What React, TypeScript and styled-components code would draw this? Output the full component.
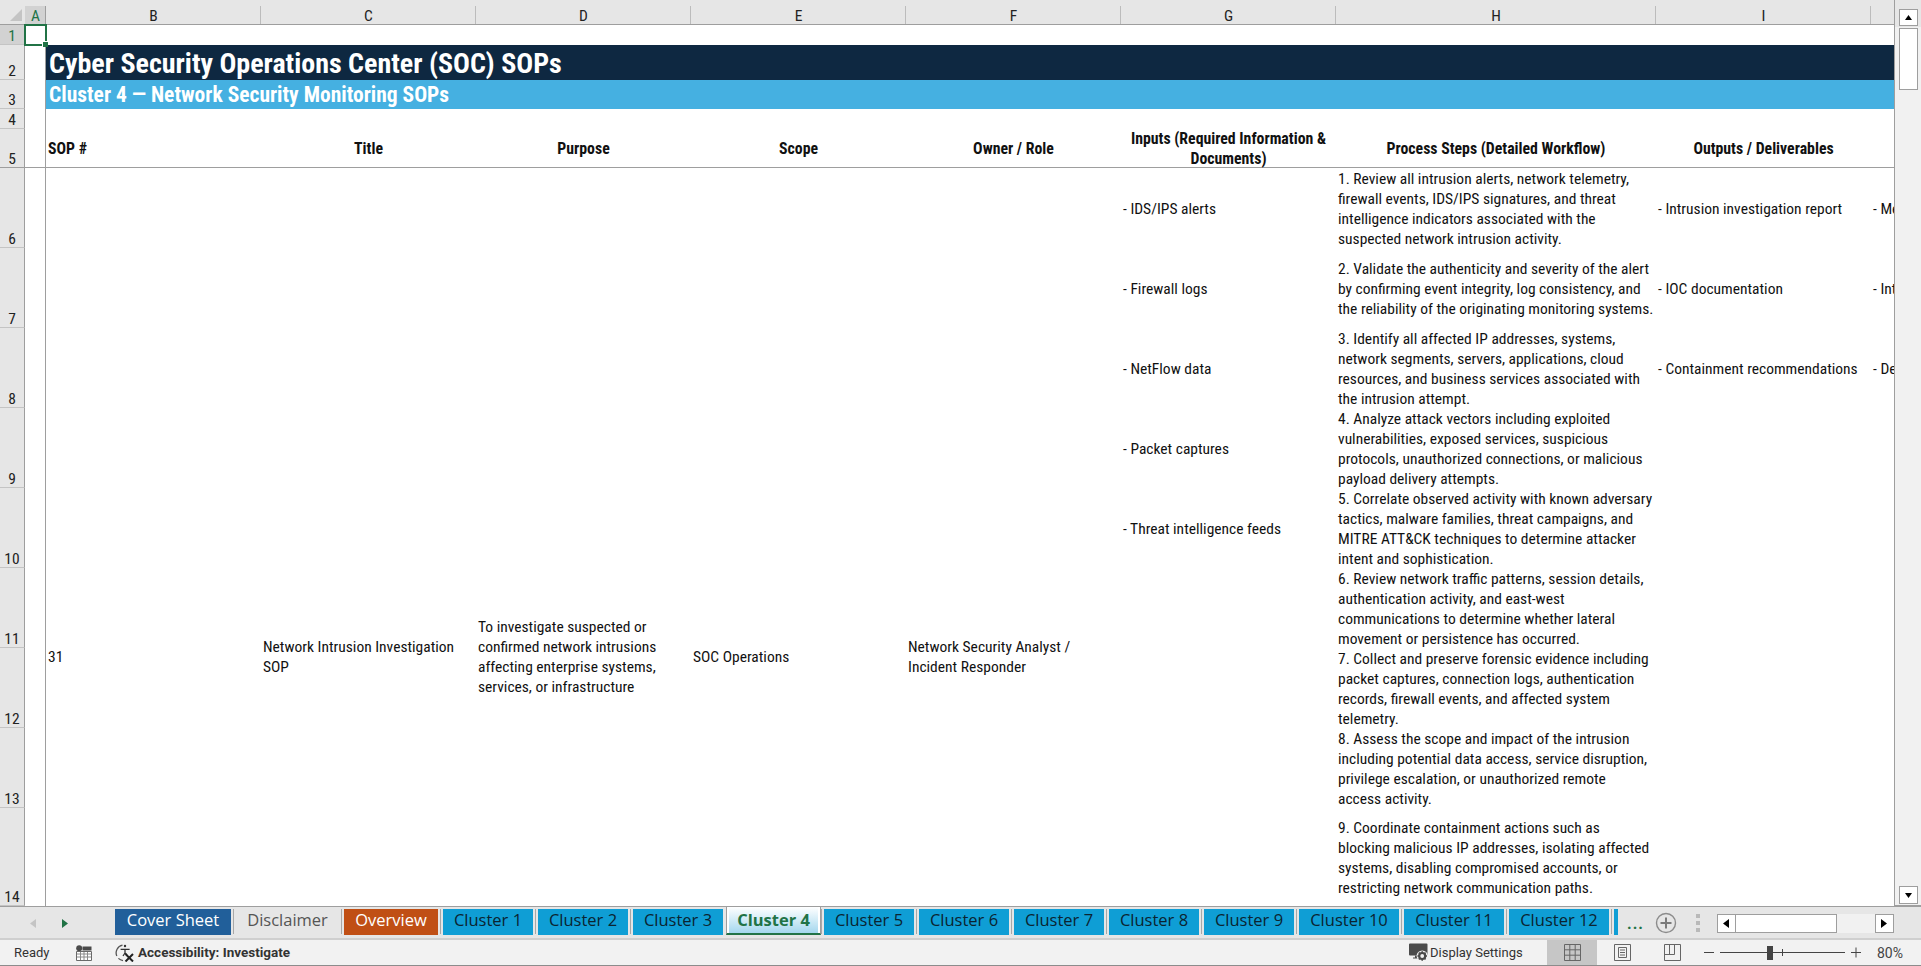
import styled, { createGlobalStyle } from "styled-components";

const sheetFont = `"Roboto Condensed", "Liberation Sans", sans-serif`;
const uiFont = `Roboto, "Liberation Sans", sans-serif`;
const tabFont = `"Open Sans", "Liberation Sans", sans-serif`;
const green = "#217346";
const headLine = "#9e9e9e";

const GlobalStyle = createGlobalStyle`
  html, body { margin: 0; padding: 0; background: #fff; overflow: hidden; }
  #root { height: 966px; }
`;

const Page = styled.div`
  width: 1921px;
  height: 966px;
  display: flex;
  flex-direction: column;
`;

const Main = styled.div`
  flex: 1;
  min-height: 0;
  display: flex;
`;

const Sheet = styled.div`
  position: relative;
  flex: 1;
  overflow: hidden;
  display: grid;
  grid-template-columns: 25px 21px repeat(6, 215px) 320px 215px 215px;
  grid-template-rows: 25px 20px 35px 29px 20px 39px repeat(8, 80px) 98px repeat(3, 80px);
  border-right: 1px solid ${headLine};
  background: #fff;
  color: #111;
  font-family: ${sheetFont};
  font-size: 15.5px;
  line-height: 20px;
`;

const Corner = styled.div`
  grid-column: 1;
  grid-row: 1;
  background: #e6e6e6;
  border-bottom: 1px solid ${headLine};
  display: flex;
  align-items: flex-end;
  justify-content: flex-end;
  padding: 0 3px 3px 0;
  svg { display: block; }
`;

const ColHead = styled.div<{ $col: number; $active?: boolean }>`
  grid-column: ${(p) => p.$col};
  grid-row: 1;
  background: linear-gradient(#e6e6e6 6px, ${(p) => (p.$active ? "#d2d2d2" : "#e6e6e6")} 6px);
  border-bottom: 1px solid ${headLine};
  text-align: center;
  padding-top: 7px;
  line-height: 18px;
  color: ${(p) => (p.$active ? green : "#222")};
  position: relative;
  &::after {
    content: "";
    position: absolute;
    right: 0;
    top: 6px;
    bottom: 0;
    width: 1px;
    background: ${(p) => (p.$active ? headLine : "#bcbcbc")};
  }
`;

const RowHead = styled.div<{ $row: number; $active?: boolean }>`
  grid-column: 1;
  grid-row: ${(p) => p.$row};
  display: flex;
  align-items: flex-end;
  justify-content: center;
  line-height: 16px;
  background: ${(p) => (p.$active ? "#d2d2d2" : "#e6e6e6")};
  border-right: 1px solid ${headLine};
  border-bottom: 1px solid ${(p) => (p.$row === 6 ? headLine : "#c4c4c4")};
  color: ${(p) => (p.$active ? green : "#222")};
`;

// frozen column A keeps a line on its right side
const FrozenA = styled.div<{ $row: number; $span?: number; $rule?: boolean }>`
  grid-column: 2;
  grid-row: ${(p) => p.$row} / span ${(p) => p.$span ?? 1};
  border-right: 1px solid ${headLine};
  border-bottom: ${(p) => (p.$rule ? `1px solid ${headLine}` : "0")};
`;

const TitleBand = styled.div<{ $row: number; $bg: string; $size: number; $lift?: number }>`
  grid-column: 3 / -1;
  grid-row: ${(p) => p.$row};
  display: flex;
  align-items: center;
  padding: ${(p) => p.$lift ?? 0}px 0 0 3px;
  background: ${(p) => p.$bg};
  color: #fff;
  font-weight: 700;
  font-size: ${(p) => p.$size}px;
  white-space: nowrap;
`;

const HeaderCell = styled.div<{ $col: number; $left?: boolean }>`
  grid-column: ${(p) => p.$col};
  grid-row: 6;
  display: flex;
  align-items: center;
  justify-content: ${(p) => (p.$left ? "flex-start" : "center")};
  text-align: ${(p) => (p.$left ? "left" : "center")};
  padding: 1px 2px 0;
  font-size: 15.8px;
  font-weight: 700;
  border-bottom: 1px solid ${headLine};
`;

const Cell = styled.div<{ $col: number; $row: number; $span?: number }>`
  grid-column: ${(p) => p.$col};
  grid-row: ${(p) => p.$row} / span ${(p) => p.$span ?? 1};
  display: flex;
  align-items: center;
  padding: ${(p) => (p.$span ? 0 : 1)}px 2px 0;
  white-space: pre-line;
  overflow: hidden;
`;

const SelectedCell = styled.div`
  position: absolute;
  left: 24px;
  top: 24px;
  width: 23px;
  height: 22px;
  box-sizing: border-box;
  border: 2px solid ${green};
  &::after {
    content: "";
    position: absolute;
    right: -3px;
    bottom: -3px;
    width: 5px;
    height: 5px;
    background: ${green};
    border-left: 1px solid #fff;
    border-top: 1px solid #fff;
  }
`;

const VScroll = styled.div`
  width: 26px;
  flex: none;
  display: flex;
  flex-direction: column;
  align-items: center;
  box-sizing: border-box;
  padding: 9px 0 1px;
  background: linear-gradient(#e6e6e6 27px, #f1f1f1 27px);
  border-bottom: 1px solid ${headLine};
`;

const ScrollButton = styled.div<{ $w: number; $h: number }>`
  width: ${(p) => p.$w}px;
  height: ${(p) => p.$h}px;
  flex: none;
  box-sizing: border-box;
  background: #fff;
  border: 1px solid ${headLine};
  display: flex;
  align-items: center;
  justify-content: center;
`;

const VThumb = styled.div`
  width: 19px;
  height: 62px;
  margin-top: 2px;
  box-sizing: border-box;
  background: #fff;
  border: 1px solid ${headLine};
`;

const VTrack = styled.div`
  flex: 1;
`;

const TabBar = styled.div`
  height: 32px;
  flex: none;
  display: flex;
  background: #e6e6e6;
  border-top: 1px solid ${headLine};
  position: relative;
  box-sizing: border-box;
`;

const TabNav = styled.div`
  width: 115px;
  flex: none;
  display: flex;
  align-items: center;
  padding: 5px 0 3px 30px;
  box-sizing: border-box;
  gap: 25px;
`;

const TabStrip = styled.div`
  width: 1503px;
  flex: none;
  display: flex;
  gap: 5px;
  overflow: hidden;
  padding-top: 2px;
  font-family: ${tabFont};
  font-size: 16.5px;
`;

const Tab = styled.div<{ $w: number; $bg?: string; $fg: string; $active?: boolean }>`
  width: ${(p) => p.$w}px;
  flex: none;
  height: 26px;
  box-sizing: border-box;
  position: relative;
  display: flex;
  align-items: center;
  justify-content: center;
  padding-bottom: 5px;
  overflow: visible;
  white-space: nowrap;
  background: ${(p) => p.$bg ?? "transparent"};
  color: ${(p) => p.$fg};
  ${(p) =>
    p.$active
      ? `
    height: 28px;
    margin-top: -2px;
    margin-left: -2px;
    margin-right: -2px;
    padding: 3px 2px 4px;
    border-left: 1px solid ${headLine};
    border-right: 1px solid ${headLine};
    border-bottom: 2px solid ${green};
    background: linear-gradient(#fff, #a4d7ee) padding-box;
    box-shadow: inset 2px 0 #fff, inset -2px 0 #fff;
    font-weight: 700;
    z-index: 1;
  `
      : `
    &::before {
      content: "";
      position: absolute;
      left: -3px;
      top: 0;
      bottom: 1px;
      width: 1px;
      background: #a8a8a8;
    }
  `}
`;

const TabTools = styled.div`
  flex: 1;
  display: flex;
  align-items: center;
  padding-top: 1px;
`;

const MoreTabs = styled.span`
  width: 28px;
  margin-left: 9px;
  padding-top: 2px;
  color: ${green};
  font-family: ${uiFont};
  font-size: 16px;
  line-height: 16px;
  font-weight: 700;
  letter-spacing: 1px;
`;

const Grip = styled.div`
  width: 4px;
  margin-left: 19px;
  display: flex;
  flex-direction: column;
  gap: 3px;
  i {
    display: block;
    width: 4px;
    height: 4px;
    background: #b9b9b9;
  }
`;

const HScroll = styled.div`
  margin-left: 17px;
  width: 177px;
  height: 19px;
  display: flex;
`;

const HThumb = styled.div`
  width: 101px;
  background: #fff;
  border: 1px solid ${headLine};
  border-left: 0;
  box-sizing: border-box;
`;

const HTrack = styled.div`
  flex: 1;
  background: #f1f1f1;
`;

const StatusBar = styled.div`
  height: 28px;
  flex: none;
  box-sizing: border-box;
  display: flex;
  align-items: center;
  background: #f2f2f2;
  border-top: 2px solid #cfcfcf;
  border-bottom: 1px solid #8c8c8c;
  color: #333;
  font-family: ${uiFont};
  font-size: 13px;
`;

const StatusText = styled.span<{ $w?: number; $bold?: boolean }>`
  flex: none;
  width: ${(p) => (p.$w ? `${p.$w}px` : "auto")};
  padding-bottom: 1px;
  font-weight: ${(p) => (p.$bold ? 700 : 400)};
  font-size: ${(p) => (p.$bold ? 13.5 : 13)}px;
  white-space: nowrap;
`;

const StatusIcon = styled.div<{ $w: number; $mr?: number }>`
  width: ${(p) => p.$w}px;
  margin-right: ${(p) => p.$mr ?? 0}px;
  flex: none;
  display: flex;
  justify-content: center;
  svg { display: block; }
`;

const StatusLeft = styled.div`
  display: flex;
  align-items: center;
  padding-left: 14px;
  width: 1409px;
  flex: none;
  box-sizing: border-box;
`;

const ViewButton = styled.div<{ $on?: boolean }>`
  width: 50px;
  height: 100%;
  flex: none;
  display: flex;
  align-items: center;
  justify-content: center;
  background: ${(p) => (p.$on ? "#c6c6c6" : "transparent")};
`;

const ZoomControl = styled.div`
  display: flex;
  align-items: center;
  margin-left: 7px;
  width: 157px;
  flex: none;
  svg { display: block; }
`;

const ZoomLabel = styled.span`
  margin-left: 16px;
  color: #444;
  font-size: 14px;
`;

const ViewGroup = styled.div`
  display: flex;
  align-self: stretch;
`;

const steps: [number, string][] = [
  [6, "1. Review all intrusion alerts, network telemetry,\nfirewall events, IDS/IPS signatures, and threat\nintelligence indicators associated with the\nsuspected network intrusion activity."],
  [7, "2. Validate the authenticity and severity of the alert\nby confirming event integrity, log consistency, and\nthe reliability of the originating monitoring systems."],
  [8, "3. Identify all affected IP addresses, systems,\nnetwork segments, servers, applications, cloud\nresources, and business services associated with\nthe intrusion attempt."],
  [9, "4. Analyze attack vectors including exploited\nvulnerabilities, exposed services, suspicious\nprotocols, unauthorized connections, or malicious\npayload delivery attempts."],
  [10, "5. Correlate observed activity with known adversary\ntactics, malware families, threat campaigns, and\nMITRE ATT&CK techniques to determine attacker\nintent and sophistication."],
  [11, "6. Review network traffic patterns, session details,\nauthentication activity, and east-west\ncommunications to determine whether lateral\nmovement or persistence has occurred."],
  [12, "7. Collect and preserve forensic evidence including\npacket captures, connection logs, authentication\nrecords, firewall events, and affected system\ntelemetry."],
  [13, "8. Assess the scope and impact of the intrusion\nincluding potential data access, service disruption,\nprivilege escalation, or unauthorized remote\naccess activity."],
  [14, "9. Coordinate containment actions such as\nblocking malicious IP addresses, isolating affected\nsystems, disabling compromised accounts, or\nrestricting network communication paths."],
];

const inputs = ["- IDS/IPS alerts", "- Firewall logs", "- NetFlow data", "- Packet captures", "- Threat intelligence feeds"];
const outputs = ["- Intrusion investigation report", "- IOC documentation", "- Containment recommendations"];
const metrics = ["- Mean time to detect", "- Intrusions confirmed", "- Detection improvements"];

const headers = ["Title", "Purpose", "Scope", "Owner / Role", "Inputs (Required Information & Documents)", "Process Steps (Detailed Workflow)", "Outputs / Deliverables"];
const columns = ["A", "B", "C", "D", "E", "F", "G", "H", "I"];

const tabs = [
  { name: "Cover Sheet", w: 116, bg: "#215f9a", fg: "#fff" },
  { name: "Disclaimer", w: 103, fg: "#555" },
  { name: "Overview", w: 94, bg: "#c04f15", fg: "#fff" },
  { name: "Cluster 1", w: 90, bg: "#0f9ed5", fg: "#0b2431" },
  { name: "Cluster 2", w: 90, bg: "#0f9ed5", fg: "#0b2431" },
  { name: "Cluster 3", w: 90, bg: "#0f9ed5", fg: "#0b2431" },
  { name: "Cluster 4", w: 95, fg: green, active: true },
  { name: "Cluster 5", w: 90, bg: "#0f9ed5", fg: "#0b2431" },
  { name: "Cluster 6", w: 90, bg: "#0f9ed5", fg: "#0b2431" },
  { name: "Cluster 7", w: 90, bg: "#0f9ed5", fg: "#0b2431" },
  { name: "Cluster 8", w: 90, bg: "#0f9ed5", fg: "#0b2431" },
  { name: "Cluster 9", w: 90, bg: "#0f9ed5", fg: "#0b2431" },
  { name: "Cluster 10", w: 100, bg: "#0f9ed5", fg: "#0b2431" },
  { name: "Cluster 11", w: 100, bg: "#0f9ed5", fg: "#0b2431" },
  { name: "Cluster 12", w: 100, bg: "#0f9ed5", fg: "#0b2431" },
  { name: "", w: 6, bg: "#0f9ed5", fg: "#0b2431" },
];

const Triangle = ({ d, fill = "#000", w = 7, h = 9 }: { d: string; fill?: string; w?: number; h?: number }) => (
  <svg width={w} height={h} viewBox="0 0 7 9"><path d={d} fill={fill} /></svg>
);

const MacroIcon = () => (
  <svg width="16" height="16" viewBox="0 0 16 16">
    <circle cx="3.2" cy="3.2" r="3" fill="#4a4a4a" />
    <path d="M6.5 1.5h9v4h-9z" fill="#4a4a4a" />
    <path d="M.5 6.5h15v9H.5z" fill="#fff" stroke="#6a6a6a" />
    <path d="M1 9h14M1 12h14M4.5 7v8M8 7v8M11.5 7v8" stroke="#8a8a8a" strokeWidth="1" fill="none" />
  </svg>
);

const AccessibilityIcon = () => (
  <svg width="20" height="18" viewBox="0 0 20 18" fill="none">
    <path d="M7.5 1.2A7.8 7.8 0 0 0 1.800 12" stroke="#555" strokeWidth="1.300" />
    <path d="M3.400 14.400A7.800 7.800 0 0 0 8 16.600" stroke="#555" strokeWidth="1.300" />
    <circle cx="10" cy="2" r="1.200" fill="#333" />
    <path d="M5.600 5.400h9M10 5.200v3.800M10 9l-2 3M10 9l2 2" stroke="#333" strokeWidth="1.300" />
    <path d="M10.500 10l7.500 7.500M18 10l-7.500 7.500" stroke="#222" strokeWidth="2" />
  </svg>
);

const DisplayIcon = () => (
  <svg width="20" height="19" viewBox="0 0 20 19">
    <path d="M0 1.500a1 1 0 0 1 1-1h16.500a1 1 0 0 1 1 1v10a1 1 0 0 1-1 1H1a1 1 0 0 1-1-1z" fill="#4b4b4b" />
    <path d="M6 12.500h3v3h-5v-1h2z" fill="#4b4b4b" />
    <circle cx="13.200" cy="13" r="5.600" fill="#f2f2f2" />
    <circle cx="13.200" cy="13" r="3" fill="none" stroke="#4b4b4b" strokeWidth="2.200" />
    <path d="M13.200 8.200v2M13.200 15.800v2M8.400 13h2M16 13h2M9.800 9.600l1.400 1.400M15.200 15l1.400 1.400M16.600 9.600L15.200 11M11.200 15l-1.400 1.400" stroke="#4b4b4b" strokeWidth="1.600" />
  </svg>
);

const GridViewIcon = () => (
  <svg width="17" height="17" viewBox="0 0 17 17" fill="none" stroke="#666">
    <path d="M.5.5h16v16H.5zM.5 5.800h16M.5 11.200h16M5.800.5v16M11.200.5v16" />
  </svg>
);

const LayoutViewIcon = () => (
  <svg width="17" height="17" viewBox="0 0 17 17" fill="none" stroke="#666">
    <path d="M.5.5h16v16H.5zM4.500 3.500h8v10h-8zM6 6h5M6 8.500h5M6 11h5" />
  </svg>
);

const BreakViewIcon = () => (
  <svg width="17" height="17" viewBox="0 0 17 17" fill="none" stroke="#666">
    <path d="M.5.5h16v16H.5zM.5 10.500h10V.5M5.500.5v10" />
  </svg>
);

const ZoomSlider = () => (
  <svg width="157" height="16" viewBox="0 0 157 16">
    <path d="M0 7.500h10M16 7.500h125M78.500 4v7M147 7.500h10M152 2.500v10" stroke="#444" strokeWidth="1" fill="none" />
    <rect x="63" y="1" width="6" height="14" fill="#444" />
  </svg>
);

const AddSheetIcon = () => (
  <svg width="22" height="22" viewBox="0 0 22 22" fill="none">
    <circle cx="11" cy="11" r="9.500" stroke="#8c8c8c" strokeWidth="1.400" />
    <path d="M11 5.500v11M5.500 11h11" stroke="#7a7a7a" strokeWidth="2" />
  </svg>
);

export default function App() {
  return (
    <Page>
      <GlobalStyle />
      <Main>
        <Sheet>
          <Corner>
            <svg width="12" height="12" viewBox="0 0 12 12"><path d="M12 0v12H0z" fill="#c4c4c4" /></svg>
          </Corner>
          {columns.map((c, i) => (
            <ColHead key={c} $col={i + 2} $active={c === "A"}>{c}</ColHead>
          ))}
          <ColHead $col={11} />

          {Array.from({ length: 14 }, (_, i) => (
            <RowHead key={i} $row={i + 2} $active={i === 0}>{i + 1}</RowHead>
          ))}

          <FrozenA $row={2} $span={4} />
          <FrozenA $row={6} $rule />
          <FrozenA $row={7} $span={12} />

          <TitleBand $row={3} $bg="#0e2841" $size={28} $lift={3}>Cyber Security Operations Center (SOC) SOPs</TitleBand>
          <TitleBand $row={4} $bg="#45b0e1" $size={21.500}>Cluster 4 — Network Security Monitoring SOPs</TitleBand>

          <HeaderCell $col={3} $left>SOP #</HeaderCell>
          {headers.map((h, i) => (
            <HeaderCell key={h} $col={i + 4}>{h}</HeaderCell>
          ))}
          <HeaderCell $col={11} />

          <Cell $col={3} $row={7} $span={12}>31</Cell>
          <Cell $col={4} $row={7} $span={12}>{"Network Intrusion Investigation\nSOP"}</Cell>
          <Cell $col={5} $row={7} $span={12}>{"To investigate suspected or\nconfirmed network intrusions\naffecting enterprise systems,\nservices, or infrastructure"}</Cell>
          <Cell $col={6} $row={7} $span={12}>SOC Operations</Cell>
          <Cell $col={7} $row={7} $span={12}>{"Network Security Analyst /\nIncident Responder"}</Cell>

          {inputs.map((t, i) => (
            <Cell key={t} $col={8} $row={7 + i}>{t}</Cell>
          ))}
          {steps.map(([row, t]) => (
            <Cell key={row} $col={9} $row={row + 1}>{t}</Cell>
          ))}
          {outputs.map((t, i) => (
            <Cell key={t} $col={10} $row={7 + i}>{t}</Cell>
          ))}
          {metrics.map((t, i) => (
            <Cell key={t} $col={11} $row={7 + i}>{t}</Cell>
          ))}

          <SelectedCell />
        </Sheet>
        <VScroll>
          <ScrollButton $w={19} $h={17}>
            <Triangle d="M3.500 2L7 7H0z" />
          </ScrollButton>
          <VThumb />
          <VTrack />
          <ScrollButton $w={19} $h={18}>
            <Triangle d="M0 2h7L3.500 7z" />
          </ScrollButton>
        </VScroll>
      </Main>

      <TabBar>
        <TabNav>
          <Triangle d="M6 0v9L0 4.500z" fill="#c4c4c4" />
          <Triangle d="M0 0v9l6-4.500z" fill={green} />
        </TabNav>
        <TabStrip>
          {tabs.map((t) => (
            <Tab key={t.name + t.w} $w={t.w} $bg={t.bg} $fg={t.fg} $active={t.active}>{t.name}</Tab>
          ))}
        </TabStrip>
        <TabTools>
          <MoreTabs>...</MoreTabs>
          <AddSheetIcon />
          <Grip><i /><i /><i /></Grip>
          <HScroll>
            <ScrollButton $w={19} $h={19}>
              <Triangle d="M6 0v9L0 4.500z" />
            </ScrollButton>
            <HThumb />
            <HTrack />
            <ScrollButton $w={19} $h={19}>
              <Triangle d="M0 0v9l6-4.500z" />
            </ScrollButton>
          </HScroll>
        </TabTools>
      </TabBar>

      <StatusBar>
        <StatusLeft>
          <StatusText $w={62}>Ready</StatusText>
          <StatusIcon $w={16} $mr={23}><MacroIcon /></StatusIcon>
          <StatusIcon $w={20} $mr={3}><AccessibilityIcon /></StatusIcon>
          <StatusText $bold>Accessibility: Investigate</StatusText>
        </StatusLeft>
        <StatusIcon $w={20} $mr={1}><DisplayIcon /></StatusIcon>
        <StatusText $w={117}>Display Settings</StatusText>
        <ViewGroup>
          <ViewButton $on><GridViewIcon /></ViewButton>
          <ViewButton><LayoutViewIcon /></ViewButton>
          <ViewButton><BreakViewIcon /></ViewButton>
        </ViewGroup>
        <ZoomControl><ZoomSlider /></ZoomControl>
        <ZoomLabel>80%</ZoomLabel>
      </StatusBar>
    </Page>
  );
}
